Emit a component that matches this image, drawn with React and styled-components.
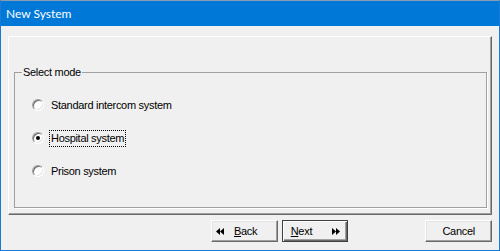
import React, { useState } from "react";
import styled, { createGlobalStyle } from "styled-components";

const GlobalStyle = createGlobalStyle`
  html, body {
    margin: 0;
    padding: 0;
    background: #f0f0f0;
  }
  * {
    box-sizing: border-box;
  }
`;

const modes = [
  { id: "standard", label: "Standard intercom system" },
  { id: "hospital", label: "Hospital system" },
  { id: "prison", label: "Prison system" },
];

function Arrows({ dir }) {
  const left = dir === "left";
  return (
    <svg width="8" height="7" viewBox="0 0 8 7">
      {left ? (
        <>
          <polygon points="4,0 4,7 0,3.5" fill="#000" />
          <polygon points="8,0 8,7 4,3.5" fill="#000" />
        </>
      ) : (
        <>
          <polygon points="0,0 0,7 4,3.5" fill="#000" />
          <polygon points="4,0 4,7 8,3.5" fill="#000" />
        </>
      )}
    </svg>
  );
}

function App() {
  const [mode, setMode] = useState("hospital");

  return (
    <Window>
      <GlobalStyle />
      <TitleBar>New System</TitleBar>
      <Body>
        <Panel>
          <Group>
            <Legend>Select mode</Legend>
            <ModeList>
              {modes.map((m) => (
                <ModeRow key={m.id} onClick={() => setMode(m.id)}>
                  <Radio checked={mode === m.id} />
                  <ModeLabel focused={mode === m.id}>{m.label}</ModeLabel>
                </ModeRow>
              ))}
            </ModeList>
          </Group>
        </Panel>
        <ButtonRow>
          <Button>
            <Arrows dir="left" />
            <Caption>
              <u>B</u>ack
            </Caption>
          </Button>
          <Button isDefault>
            <Caption>
              <u>N</u>ext
            </Caption>
            <Arrows dir="right" />
          </Button>
          <CancelButton>Cancel</CancelButton>
        </ButtonRow>
      </Body>
    </Window>
  );
}

const Window = styled.div`
  width: 500px;
  height: 251px;
  display: flex;
  flex-direction: column;
  border: 1px solid #1a7ad4;
  border-top-color: #8a9bb0;
  background: #f0f0f0;
  font-family: "Liberation Sans", Arial, sans-serif;
  font-size: 11px;
  letter-spacing: -0.3px;
  color: #000;
`;

const TitleBar = styled.div`
  height: 25px;
  flex-shrink: 0;
  background: #0078d7;
  color: #fff;
  font-family: Lato, "Noto Sans", sans-serif;
  font-size: 12px;
  letter-spacing: 0;
  line-height: 25px;
  padding-left: 5px;
`;

const Body = styled.div`
  flex: 1;
  display: flex;
  flex-direction: column;
  padding: 10px 7px 0 7px;
`;

const Panel = styled.div`
  height: 179px;
  padding: 28px 4px 6px 5px;
  border-top: 1px solid #fff;
  border-left: 1px solid #fff;
  border-right: 1px solid #696969;
  border-bottom: 1px solid #696969;
  box-shadow: inset -1px -1px 0 #a0a0a0;
  display: flex;
`;

const Group = styled.fieldset`
  flex: 1;
  margin: 0;
  padding: 0;
  border: 1px solid #a0a0a0;
  box-shadow: 1px 1px 0 #fff;
  min-width: 0;
`;

const Legend = styled.legend`
  margin-left: 7px;
  padding: 0 1px;
  line-height: 14px;
`;

const ModeList = styled.div`
  display: flex;
  flex-direction: column;
  gap: 17px;
  padding: 18px 0 0 17px;
`;

const ModeRow = styled.div`
  display: flex;
  align-items: center;
  height: 16px;
  cursor: default;
`;

const Radio = styled.span`
  position: relative;
  width: 12px;
  height: 12px;
  border-radius: 50%;
  background: #fff;
  border: 1px solid;
  border-color: #a0a0a0 #fff #fff #a0a0a0;
  box-shadow: inset 1px 1px 0 #696969, inset -1px -1px 0 #e3e3e3;
  margin-right: 5px;
  flex-shrink: 0;

  &::after {
    content: "";
    display: ${(p) => (p.checked ? "block" : "none")};
    position: absolute;
    left: 3px;
    top: 3px;
    width: 4px;
    height: 4px;
    border-radius: 50%;
    background: #000;
  }
`;

const ModeLabel = styled.span`
  padding: 1px 1px;
  line-height: 13px;
  border: 1px dotted ${(p) => (p.focused ? "#000" : "transparent")};
`;

const ButtonRow = styled.div`
  display: flex;
  margin-top: 5px;
  padding-left: 203px;
  gap: 4px;
`;

const Button = styled.button`
  width: 67px;
  height: 22px;
  display: flex;
  align-items: center;
  gap: ${(p) => (p.isDefault ? "6px" : "10px")};
  padding: 0 ${(p) => (p.isDefault ? "7px 0 8px" : "14px 0 4px")};
  font-family: "Liberation Sans", Arial, sans-serif;
  font-size: 11px;
  letter-spacing: -0.3px;
  color: #000;
  background: #f0f0f0;
  border: 1px solid;
  border-color: ${(p) =>
    p.isDefault ? "#404040" : "#fff #696969 #696969 #fff"};
  box-shadow: ${(p) =>
    p.isDefault
      ? "inset 1px 1px 0 #fff, inset -1px -1px 0 #696969, inset -2px -2px 0 #a0a0a0"
      : "inset -1px -1px 0 #a0a0a0, inset 1px 1px 0 #e3e3e3"};
  justify-content: ${(p) => (p.isDefault ? "space-between" : "flex-start")};
  u {
    text-decoration: underline;
  }
`;

const Caption = styled.span`
  line-height: 13px;
`;

const CancelButton = styled(Button)`
  justify-content: center;
  padding: 0;
  margin-left: 73px;
`;

export default App;
